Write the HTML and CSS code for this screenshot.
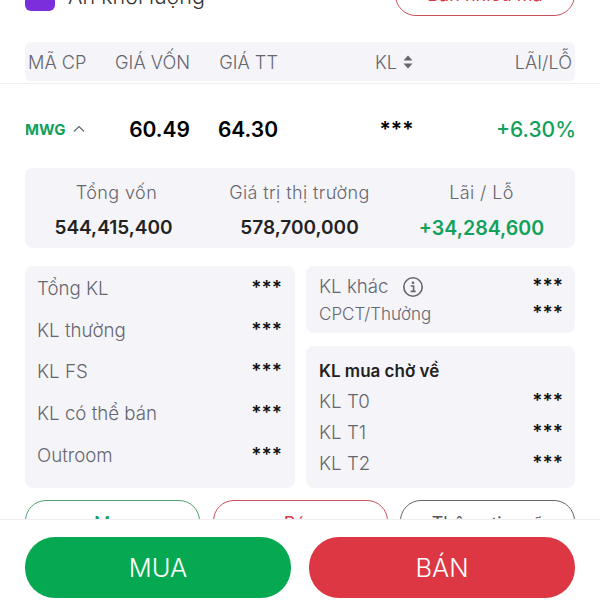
FILE: index.html
```html
<!DOCTYPE html>
<html>
    <head>
        <title>MWG</title>
        <meta charset="UTF-8">
        <link rel="stylesheet" href="styles.css">
    </head>
    <body>
        <div class="screen">
            <div class="top-row">
                <div class="hide-toggle">
                    <span class="check"></span>
                    <span>Ẩn khối lượng</span>
                </div>
                <button class="sell-many">Bán nhiều mã</button>
            </div>

            <div class="table-head cols">
                <span class="first">MÃ CP</span>
                <span class="num">GIÁ VỐN</span>
                <span class="num">GIÁ TT</span>
                <span class="mid">KL
                    <svg class="sort" width="10" height="14" viewBox="0 0 10 14"><path d="M5 0.5 9.5 5.5H0.5Z M5 13.5 0.5 8.5H9.5Z" fill="#666670"/></svg>
                </span>
                <span class="num last">LÃI/LỖ</span>
            </div>
            <div class="divider"></div>

            <div class="stock-row cols">
                <span class="ticker">MWG
                    <svg width="12" height="8" viewBox="0 0 12 8"><path d="M1 6.5 6 1.5 11 6.5" fill="none" stroke="#666670" stroke-width="1.2"/></svg>
                </span>
                <span class="num price">60.49</span>
                <span class="num price">64.30</span>
                <span class="mid stars-big">***</span>
                <span class="num change">+6.30%</span>
            </div>

            <div class="summary panel">
                <div class="sum-col">
                    <span class="sum-label">Tổng vốn</span>
                    <span class="sum-value shifted">544,415,400</span>
                </div>
                <div class="sum-col">
                    <span class="sum-label">Giá trị thị trường</span>
                    <span class="sum-value">578,700,000</span>
                </div>
                <div class="sum-col">
                    <span class="sum-label">Lãi / Lỗ</span>
                    <span class="sum-value green">+34,284,600</span>
                </div>
            </div>

            <div class="details">
                <div class="panel left-card">
                    <div class="line"><span>Tổng KL</span><span class="stars">***</span></div>
                    <div class="line"><span>KL thường</span><span class="stars">***</span></div>
                    <div class="line"><span>KL FS</span><span class="stars">***</span></div>
                    <div class="line"><span>KL có thể bán</span><span class="stars">***</span></div>
                    <div class="line"><span>Outroom</span><span class="stars">***</span></div>
                </div>
                <div class="right-stack">
                    <div class="panel other-card">
                        <div class="line"><span class="with-icon">KL khác
                            <svg width="22" height="22" viewBox="0 0 22 22"><circle cx="11" cy="11" r="9.2" fill="none" stroke="#666670" stroke-width="1.6"/><circle cx="11" cy="6.8" r="1.3" fill="#666670"/><path d="M8.8 10H11.6V15.2M8.6 15.4H13.6" fill="none" stroke="#666670" stroke-width="1.6"/></svg>
                        </span><span class="stars">***</span></div>
                        <div class="line"><span class="narrow">CPCT/Thưởng</span><span class="stars">***</span></div>
                    </div>
                    <div class="panel wait-card">
                        <div class="wait-title">KL mua chờ về</div>
                        <div class="line"><span>KL T0</span><span class="stars">***</span></div>
                        <div class="line"><span>KL T1</span><span class="stars">***</span></div>
                        <div class="line"><span>KL T2</span><span class="stars">***</span></div>
                    </div>
                </div>
            </div>

            <div class="actions">
                <button class="outline green-line">Mua</button>
                <button class="outline red-line">Bán</button>
                <button class="outline grey-line">Thông tin mã</button>
            </div>

            <div class="footer">
                <button class="big buy">MUA</button>
                <button class="big sell">BÁN</button>
            </div>
        </div>
    </body>
</html>
```

FILE: styles.css
```css
* {
    box-sizing: border-box;
}
body {
    margin: 0;
    background-color: white;
    font-family: Inter, "Noto Sans", sans-serif;
    color: #66666e;
}
button {
    font-family: inherit;
    background: none;
    padding: 0;
}
.screen {
    position: relative;
    width: 600px;
    height: 600px;
    padding: 0 25px;
    overflow: hidden;
}
.panel {
    background-color: #f5f5f9;
    border-radius: 8px;
}

/* top row, cut off by the screen edge */
.top-row {
    display: flex;
    justify-content: space-between;
    align-items: flex-end;
    height: 68px;
    margin-top: -26px;
    padding-bottom: 26px;
}
.hide-toggle {
    display: flex;
    align-items: center;
    gap: 13px;
    height: 30px;
    margin-bottom: 5px;
    font-size: 21.5px;
    font-weight: 300;
    color: #333;
}
.check {
    width: 30px;
    height: 30px;
    border-radius: 6px;
    background-color: #7b2fdc;
}
.sell-many {
    width: 180px;
    height: 42px;
    padding-bottom: 2px;
    border: 1.5px solid #c8505c;
    border-radius: 21px;
    color: #d43a48;
    font-size: 18px;
}

/* table */
.cols {
    display: grid;
    grid-template-columns: 88px 77px 88px 232px 65px;
    align-items: center;
}
.num {
    justify-self: end;
}
.mid {
    justify-self: center;
}
.table-head {
    height: 39px;
    padding-top: 1px;
    background-color: #f5f5f9;
    border-radius: 6px;
    font-size: 18.2px;
    font-weight: 300;
    white-space: nowrap;
}
.table-head .first {
    padding-left: 3px;
}
.table-head .last {
    padding-right: 3px;
}
.table-head .mid {
    display: flex;
    align-items: center;
    gap: 6px;
}
.divider {
    height: 1px;
    margin: 2px -25px 0;
    background-color: #f0f0f3;
}
.stock-row {
    height: 84px;
    padding-top: 6px;
    color: black;
}
.ticker {
    display: flex;
    align-items: center;
    gap: 8px;
    font-size: 15px;
    font-weight: 700;
    color: #12a15c;
}
.price {
    font-size: 21px;
    font-weight: 600;
}
.stars-big {
    margin-left: 5px;
    font-size: 21px;
    font-weight: 600;
}
.change {
    margin-right: -1px;
    font-size: 21px;
    font-weight: 500;
    color: #12a15c;
    white-space: nowrap;
}

/* summary */
.summary {
    display: grid;
    grid-template-columns: 183px 183px 181px;
    height: 80px;
    padding-top: 13px;
}
.sum-col {
    display: flex;
    flex-direction: column;
    align-items: center;
    gap: 11px;
}
.sum-label {
    font-size: 18px;
    font-weight: 300;
    letter-spacing: 0.4px;
    line-height: 24px;
}
.sum-value {
    font-size: 19px;
    font-weight: 600;
    line-height: 24px;
    color: #222;
}
.sum-value.shifted {
    margin-right: 6px;
}
.sum-value.green {
    font-size: 19.6px;
    color: #12a15c;
}

/* detail cards */
.details {
    display: grid;
    grid-template-columns: 270px 269px;
    gap: 11px;
    height: 222px;
    margin-top: 18px;
}
.line {
    display: flex;
    justify-content: space-between;
    font-size: 18.7px;
    font-weight: 300;
    line-height: 24px;
}
.line .narrow {
    font-size: 17px;
}
.stars {
    margin-top: 2px;
    font-size: 19px;
    font-weight: 600;
    color: #111;
    line-height: 18px;
}
.left-card {
    display: flex;
    flex-direction: column;
    gap: 17.7px;
    padding: 11px 13px 0 12px;
}
.right-stack {
    display: flex;
    flex-direction: column;
    gap: 13px;
}
.other-card {
    height: 67px;
    padding: 9px 12px 0 13px;
    display: flex;
    flex-direction: column;
    gap: 3px;
}
.with-icon {
    display: flex;
    align-items: center;
    gap: 13px;
}
.wait-card {
    flex: 1;
    display: flex;
    flex-direction: column;
    gap: 7px;
    padding: 13px 12px 0 13px;
}
.wait-title {
    font-size: 17px;
    font-weight: 600;
    line-height: 24px;
    color: #222;
}

/* buttons under the cards, mostly hidden by the footer */
.actions {
    display: grid;
    grid-template-columns: 175px 175px 175px;
    gap: 12.5px;
    margin-top: 12px;
}
.outline {
    height: 42px;
    padding-top: 4px;
    border-radius: 21px;
    border: 1.5px solid;
    font-size: 18px;
}
.green-line {
    border-color: #4fa56f;
    color: #12a15c;
}
.red-line {
    border-color: #c8505c;
    color: #d43a48;
}
.grey-line {
    border-color: #666;
    color: #555;
}

.footer {
    position: absolute;
    left: 0;
    top: 519px;
    width: 600px;
    height: 81px;
    padding: 17px 25px 0;
    display: flex;
    justify-content: space-between;
    background-color: white;
    border-top: 1px solid #eeeef0;
}
.big {
    width: 266px;
    height: 61px;
    border: 0;
    border-radius: 30px;
    color: white;
    font-size: 25.5px;
    font-weight: 300;
}
.buy {
    background-color: #06a951;
}
.sell {
    background-color: #dc3743;
}
```
